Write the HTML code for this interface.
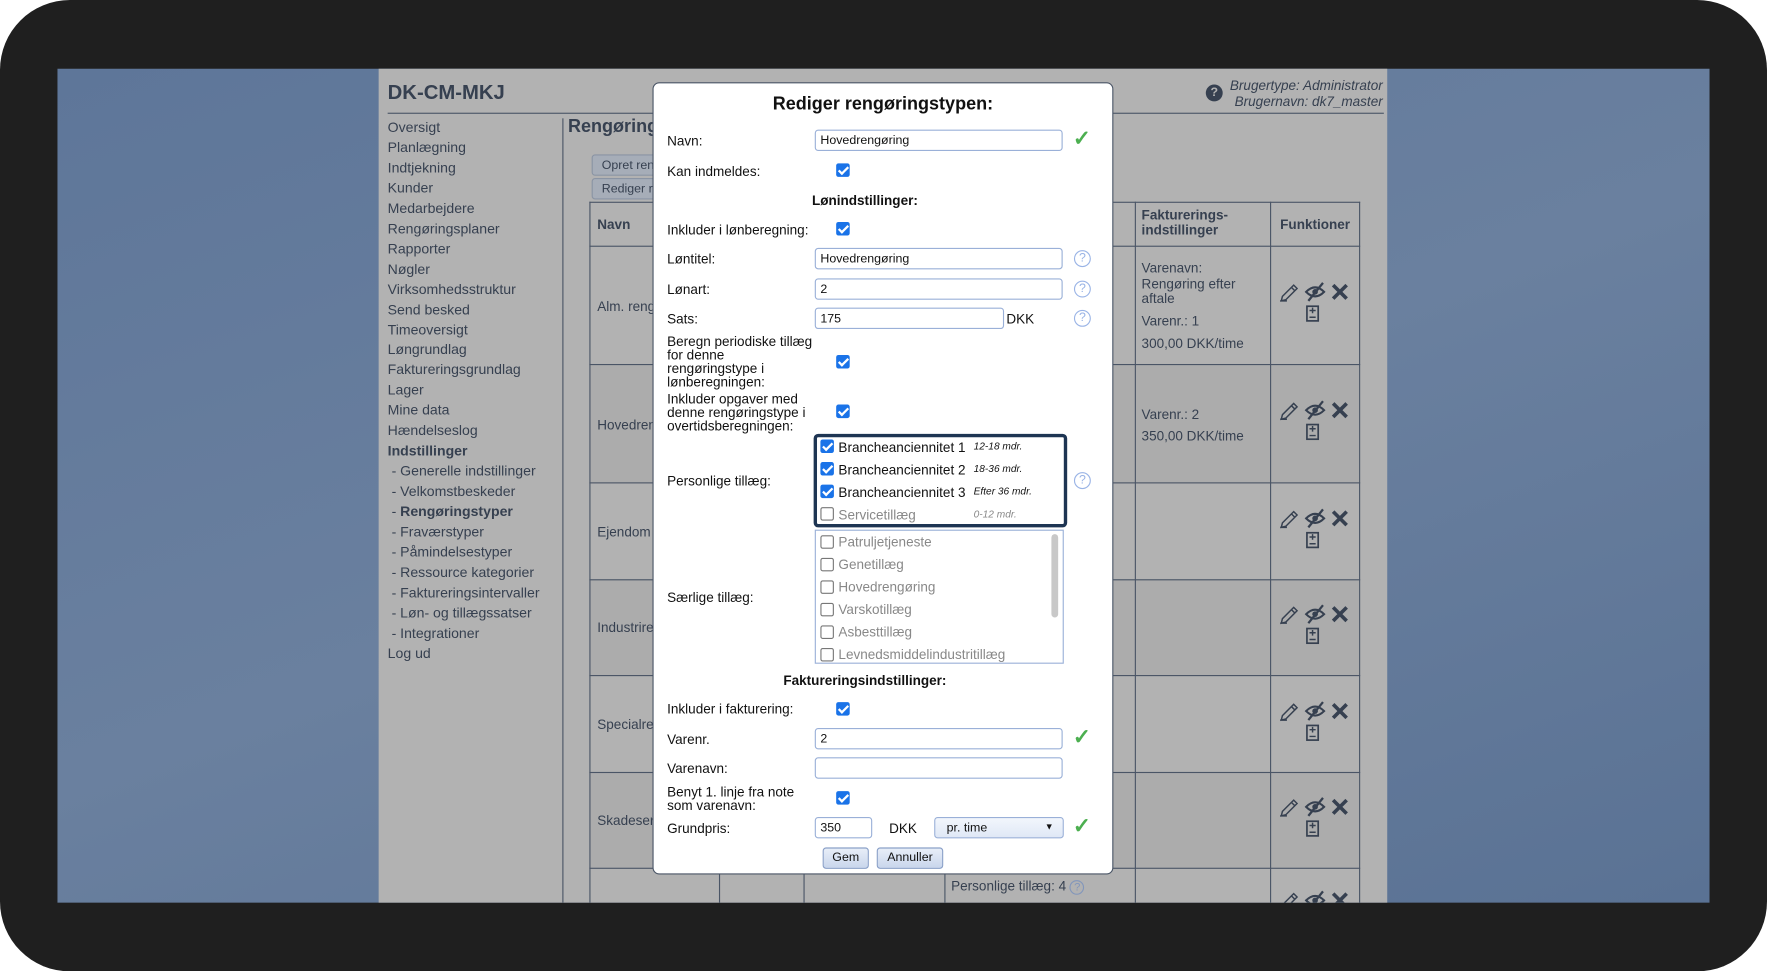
<!DOCTYPE html>
<html><head><meta charset="utf-8"><style>
*{margin:0;padding:0;box-sizing:border-box}
html,body{width:1767px;height:971px;overflow:hidden;background:#fff}
#s{position:absolute;left:0;top:0;width:1568px;height:862px;transform:scale(1.12691);transform-origin:0 0;font-family:"Liberation Sans",Arial,sans-serif}
.a{position:absolute;white-space:nowrap}
#frame{left:0;top:0;width:1568px;height:862px;background:#1f1f1f;border-radius:62px}
#scr{left:51px;top:61px;width:1466px;height:740px;background:linear-gradient(160deg,#5e7699 0%,#6a809f 50%,#5a7294 100%);overflow:hidden}
#pg{left:336px;top:61px;width:895px;height:740px;background:#b2b2b2;color:#364050}
.t{position:absolute;font-size:12.5px;color:#364050}
.ln{position:absolute;background:#4a5566}
#m{left:579px;top:73px;width:409px;height:703px;background:#fff;border:1px solid #4a5566;border-radius:6px;color:#111;font-size:12px}
.l{position:absolute;left:12px;font-size:12px;color:#111;line-height:12px}
.in{position:absolute;height:19px;border:1px solid #9ab0d8;border-radius:3px;font-size:11px;padding:3px 4px;color:#111;background:#fff}
.cb{position:absolute;width:12px;height:12px;background:#1a73e8;border-radius:2px}
.cb:after{content:"";position:absolute;left:4px;top:1px;width:3px;height:7px;border:solid #fff;border-width:0 2px 2px 0;transform:rotate(45deg)}
.ub{position:absolute;width:12px;height:12px;border:1px solid #777;border-radius:2px;background:#fff}
.hq{position:absolute;width:15px;height:15px;border:1px solid #9ab4e6;border-radius:50%;color:#9ab4e6;font-size:11px;text-align:center;line-height:13px}
.ok{position:absolute;color:#4caf50;font-size:19px;font-weight:bold}
.it{position:absolute;left:20px;font-size:12px;color:#111}
.it i{position:absolute;left:120px;top:1px;font-size:9px}
.g{color:#888}
.btn{position:absolute;top:678px;height:19px;border:1px solid #8aa0c8;border-radius:3px;background:linear-gradient(#e8eef8,#c9d6ec);font-size:11px;text-align:center;line-height:17px;color:#111}
.ic{position:absolute;left:1134px;width:66px;height:40px}
</style></head><body><div id="s">
<svg width="0" height="0" style="position:absolute"><defs>
<g id="icons">
<path d="M4 16 L14 6 L17 9 L7 19 L3 20 Z M12 8 L15 11 M2 20 L8 20" fill="none" stroke="#364050" stroke-width="1.3"/>
<g transform="translate(24,0)"><path d="M1 12 Q9 4 17 12 Q9 20 1 12 Z" fill="none" stroke="#364050" stroke-width="1.8"/><circle cx="9" cy="12" r="2.5" fill="#364050"/><path d="M3 20 L16 4" stroke="#364050" stroke-width="2"/></g>
<path d="M49 6 L61 18 M61 6 L49 18" stroke="#364050" stroke-width="3.2"/>
<g transform="translate(25,24)"><rect x="0.75" y="0.75" width="10" height="13" fill="none" stroke="#364050" stroke-width="1.5"/><path d="M3 4.5 H8.5 M5.75 2 V7 M3 10.5 H8.5" stroke="#364050" stroke-width="1.3"/></g>
</g></defs></svg>
<div class="a" id="frame"></div>
<div class="a" id="scr"></div>
<div class="a" id="pg"></div>
<div class="a" style="left:344px;top:72px;font-size:18px;font-weight:bold;color:#364050">DK-CM-MKJ</div>
<div class="ln" style="left:344px;top:100px;width:884px;height:1px"></div>
<div class="ln" style="left:499px;top:105px;width:1px;height:696px"></div>
<div class="a" style="left:1070px;top:75px;width:15px;height:15px;border-radius:50%;background:#364050;color:#b2b2b2;font-size:11px;font-weight:bold;text-align:center;line-height:15px">?</div>
<div class="a" style="left:1088px;top:69px;font-size:12px;font-style:italic;color:#364050;text-align:right;width:139px;line-height:14px">Brugertype: Administrator<br>Brugernavn: dk7_master</div>
<div class="t" style="left:344px;top:105px;line-height:17.95px;white-space:nowrap">Oversigt<br>Planlægning<br>Indtjekning<br>Kunder<br>Medarbejdere<br>Rengøringsplaner<br>Rapporter<br>Nøgler<br>Virksomhedsstruktur<br>Send besked<br>Timeoversigt<br>Løngrundlag<br>Faktureringsgrundlag<br>Lager<br>Mine data<br>Hændelseslog<br><b>Indstillinger</b><br>&nbsp;- Generelle indstillinger<br>&nbsp;- Velkomstbeskeder<br>&nbsp;- <b>Rengøringstyper</b><br>&nbsp;- Fraværstyper<br>&nbsp;- Påmindelsestyper<br>&nbsp;- Ressource kategorier<br>&nbsp;- Faktureringsintervaller<br>&nbsp;- Løn- og tillægssatser<br>&nbsp;- Integrationer<br>Log ud</div>
<div class="a" style="left:504px;top:104px;font-size:16px;font-weight:bold;color:#364050">Rengøringstyper</div>
<div class="a" style="left:525px;top:137px;width:70px;height:19px;border:1px solid #8a94a4;border-radius:3px;background:#a6adb8;font-size:11px;padding:3px 8px;color:#364050">Opret rengøringstype</div>
<div class="a" style="left:525px;top:158px;width:70px;height:19px;border:1px solid #8a94a4;border-radius:3px;background:#a6adb8;font-size:11px;padding:3px 8px;color:#364050">Rediger rækkefølge</div>
<div class="a" style="left:523px;top:179px;width:684px;height:622px;border:1px solid #4a5566;border-bottom:none"></div>
<div class="a" style="left:524px;top:323px;width:682px;height:105px;background:#acacac"></div>
<div class="a" style="left:524px;top:514px;width:682px;height:85px;background:#acacac"></div>
<div class="a" style="left:524px;top:685px;width:682px;height:85px;background:#acacac"></div>
<div class="ln" style="left:523px;top:218px;width:684px;height:1px"></div>
<div class="ln" style="left:523px;top:323px;width:684px;height:1px"></div>
<div class="ln" style="left:523px;top:428px;width:684px;height:1px"></div>
<div class="ln" style="left:523px;top:514px;width:684px;height:1px"></div>
<div class="ln" style="left:523px;top:599px;width:684px;height:1px"></div>
<div class="ln" style="left:523px;top:685px;width:684px;height:1px"></div>
<div class="ln" style="left:523px;top:770px;width:684px;height:1px"></div>
<div class="ln" style="left:638px;top:770px;width:1px;height:31px"></div>
<div class="ln" style="left:713px;top:770px;width:1px;height:31px"></div>
<div class="ln" style="left:838px;top:770px;width:1px;height:31px"></div>
<div class="ln" style="left:1007px;top:179px;width:1px;height:622px"></div>
<div class="ln" style="left:1127px;top:179px;width:1px;height:622px"></div>
<div class="t" style="left:530px;top:192px;font-weight:bold;font-size:12px">Navn</div>
<div class="t" style="left:1013px;top:185px;font-weight:bold;font-size:12px;line-height:13px">Fakturerings-<br>indstillinger</div>
<div class="t" style="left:1136px;top:192px;font-weight:bold;font-size:12px">Funktioner</div>
<div class="t" style="left:530px;top:265px;font-size:12px">Alm. rengøring</div>
<div class="t" style="left:530px;top:370px;font-size:12px">Hovedrengøring</div>
<div class="t" style="left:530px;top:465px;font-size:12px">Ejendom</div>
<div class="t" style="left:530px;top:550px;font-size:12px">Industrirengøring</div>
<div class="t" style="left:530px;top:636px;font-size:12px">Specialrengøring</div>
<div class="t" style="left:530px;top:721px;font-size:12px">Skadeservice</div>
<div class="t" style="left:1013px;top:232px;font-size:12px;line-height:13.5px">Varenavn:<br>Rengøring efter<br>aftale</div>
<div class="t" style="left:1013px;top:278px;font-size:12px">Varenr.: 1</div>
<div class="t" style="left:1013px;top:298px;font-size:12px">300,00 DKK/time</div>
<div class="t" style="left:1013px;top:361px;font-size:12px">Varenr.: 2</div>
<div class="t" style="left:1013px;top:380px;font-size:12px">350,00 DKK/time</div>
<div class="t" style="left:844px;top:779px;font-size:12px">Personlige tillæg: 4 <span style="display:inline-block;width:13px;height:13px;border:1px solid #8296bb;border-radius:50%;font-size:10px;text-align:center;line-height:11px;color:#8296bb">?</span></div>
<svg class="ic" style="top:247px" viewBox="0 0 66 40"><use href="#icons"/></svg>
<svg class="ic" style="top:352px" viewBox="0 0 66 40"><use href="#icons"/></svg>
<svg class="ic" style="top:448px" viewBox="0 0 66 40"><use href="#icons"/></svg>
<svg class="ic" style="top:533px" viewBox="0 0 66 40"><use href="#icons"/></svg>
<svg class="ic" style="top:619px" viewBox="0 0 66 40"><use href="#icons"/></svg>
<svg class="ic" style="top:704px" viewBox="0 0 66 40"><use href="#icons"/></svg>
<div class="a" style="left:1134px;top:787px;width:66px;height:14px;overflow:hidden"><svg style="position:absolute;left:0;top:0;width:66px;height:40px" viewBox="0 0 66 40"><use href="#icons"/></svg></div>
<div class="a" id="m">
<div class="a" style="left:0;width:407px;top:10px;text-align:center;font-size:16px;font-weight:bold">Rediger rengøringstypen:</div>
<div class="l" style="top:45px">Navn:</div>
<div class="in" style="left:143px;top:41px;width:220px">Hovedrengøring</div>
<div class="ok" style="left:372px;top:38px">✓</div>
<div class="l" style="top:72px">Kan indmeldes:</div>
<div class="cb" style="left:162px;top:71px"></div>
<div class="a" style="left:0;width:375px;top:97px;text-align:center;font-weight:bold">Lønindstillinger:</div>
<div class="l" style="top:124px">Inkluder i lønberegning:</div>
<div class="cb" style="left:162px;top:123px"></div>
<div class="l" style="top:150px">Løntitel:</div>
<div class="in" style="left:143px;top:146px;width:220px">Hovedrengøring</div>
<div class="hq" style="left:373px;top:148px">?</div>
<div class="l" style="top:177px">Lønart:</div>
<div class="in" style="left:143px;top:173px;width:220px">2</div>
<div class="hq" style="left:373px;top:175px">?</div>
<div class="l" style="top:203px">Sats:</div>
<div class="in" style="left:143px;top:199px;width:168px">175</div>
<div class="a" style="left:313px;top:202px;font-size:12px">DKK</div>
<div class="hq" style="left:373px;top:201px">?</div>
<div class="l" style="top:223px">Beregn periodiske tillæg<br>for denne<br>rengøringstype i<br>lønberegningen:</div>
<div class="cb" style="left:162px;top:241px"></div>
<div class="l" style="top:274px">Inkluder opgaver med<br>denne rengøringstype i<br>overtidsberegningen:</div>
<div class="cb" style="left:162px;top:285px"></div>
<div class="l" style="top:347px">Personlige tillæg:</div>
<div class="a" style="left:142px;top:311px;width:225px;height:83px;border:3px solid #1e3553;border-radius:4px"></div>
<div class="cb" style="left:148px;top:316px"></div><div class="it" style="left:164px;top:316px">Brancheanciennitet 1<i style="left:120px">12-18 mdr.</i></div>
<div class="cb" style="left:148px;top:336px"></div><div class="it" style="left:164px;top:336px">Brancheanciennitet 2<i style="left:120px">18-36 mdr.</i></div>
<div class="cb" style="left:148px;top:356px"></div><div class="it" style="left:164px;top:356px">Brancheanciennitet 3<i style="left:120px">Efter 36 mdr.</i></div>
<div class="ub" style="left:148px;top:376px"></div><div class="it g" style="left:164px;top:376px">Servicetillæg<i style="left:120px">0-12 mdr.</i></div>
<div class="hq" style="left:373px;top:345px">?</div>
<div class="l" style="top:450px">Særlige tillæg:</div>
<div class="a" style="left:143px;top:396px;width:221px;height:119px;border:1px solid #9ab0d8;overflow:hidden">
<div class="a" style="left:209px;top:3px;width:6px;height:74px;background:#c8c8c8;border-radius:3px"></div>
<div class="ub" style="left:4px;top:4px"></div><div class="it g" style="left:20px;top:3px">Patruljetjeneste</div>
<div class="ub" style="left:4px;top:24px"></div><div class="it g" style="left:20px;top:23px">Genetillæg</div>
<div class="ub" style="left:4px;top:44px"></div><div class="it g" style="left:20px;top:43px">Hovedrengøring</div>
<div class="ub" style="left:4px;top:64px"></div><div class="it g" style="left:20px;top:63px">Varskotillæg</div>
<div class="ub" style="left:4px;top:84px"></div><div class="it g" style="left:20px;top:83px">Asbesttillæg</div>
<div class="ub" style="left:4px;top:104px"></div><div class="it g" style="left:20px;top:103px">Levnedsmiddelindustritillæg</div>
</div>
<div class="a" style="left:0;width:375px;top:523px;text-align:center;font-weight:bold">Faktureringsindstillinger:</div>
<div class="l" style="top:549px">Inkluder i fakturering:</div>
<div class="cb" style="left:162px;top:549px"></div>
<div class="l" style="top:576px">Varenr.</div>
<div class="in" style="left:143px;top:572px;width:220px">2</div>
<div class="ok" style="left:372px;top:569px">✓</div>
<div class="l" style="top:602px">Varenavn:</div>
<div class="in" style="left:143px;top:598px;width:220px"></div>
<div class="l" style="top:623px">Benyt 1. linje fra note<br>som varenavn:</div>
<div class="cb" style="left:162px;top:628px"></div>
<div class="l" style="top:655px">Grundpris:</div>
<div class="in" style="left:143px;top:651px;width:51px">350</div>
<div class="a" style="left:209px;top:654px;font-size:12px">DKK</div>
<div class="in" style="left:249px;top:651px;width:115px;background:linear-gradient(#f2f6fc,#dfe8f6);padding-left:10px">pr. time<span style="position:absolute;right:8px;top:3px;font-size:8px">▼</span></div>
<div class="ok" style="left:372px;top:648px">✓</div>
<div class="btn" style="left:150px;width:41px">Gem</div>
<div class="btn" style="left:198px;width:59px">Annuller</div>
</div>
</div></body></html>
